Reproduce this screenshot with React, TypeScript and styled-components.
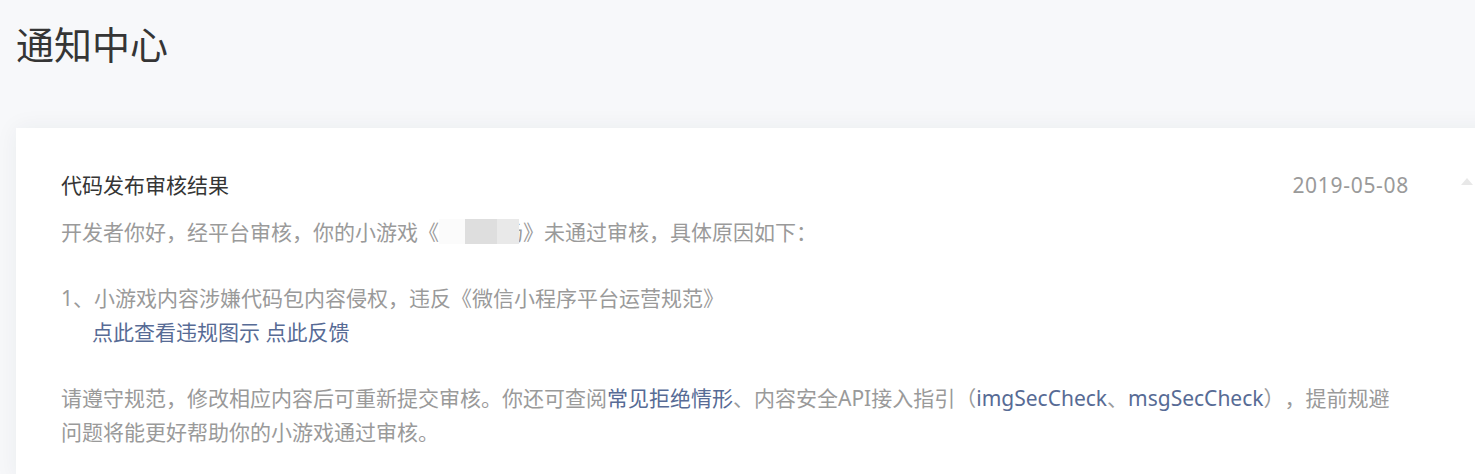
import * as React from 'react';
import styled, { createGlobalStyle } from 'styled-components';

const GlobalStyle = createGlobalStyle`
  html,
  body {
    margin: 0;
    padding: 0;
    background: #f7f8fa;
    overflow: hidden;
  }
  body {
    font-family: 'Noto Sans', 'Noto Sans CJK SC', sans-serif;
    -webkit-font-smoothing: antialiased;
    text-spacing-trim: space-all;
  }
`;

const Page = styled.div`
  width: 1560px;
  min-height: 474px;
`;

const PageHeader = styled.header`
  box-sizing: border-box;
  height: 128px;
  padding: 16px 16px 0;
`;

const PageTitle = styled.h1`
  margin: 0;
  font-size: 38px;
  line-height: 54px;
  font-weight: 400;
  color: #353535;
  font-family: 'Noto Sans CJK SC', sans-serif;
`;

const Card = styled.section`
  box-sizing: border-box;
  width: 1502px;
  margin-left: 16px;
  padding: 40px 45px 30px;
  background: #fff;
  box-shadow: 0 0 22px rgba(40, 50, 70, 0.06);
`;

const CardHead = styled.div`
  display: flex;
  align-items: center;
  margin-bottom: 13px;
`;

const CardTitle = styled.h2`
  margin: 0;
  font-size: 21px;
  line-height: 34px;
  font-weight: 400;
  color: #353535;
`;

const DateText = styled.span`
  margin-left: auto;
  font-size: 21px;
  line-height: 34px;
  letter-spacing: 0.7px;
  color: #9a9a9a;
`;

const Arrow = styled.span`
  width: 0;
  height: 0;
  margin-left: 52px;
  margin-top: -8px;
  border-left: 6px solid transparent;
  border-right: 6px solid transparent;
  border-bottom: 7px solid #e8e8e8;
`;

const Body = styled.div`
  width: 1340px;
  font-size: 21px;
  line-height: 34px;
  color: #9a9a9a;
`;

const Para = styled.p<{ indent?: boolean }>`
  margin: 0;
  padding-left: ${(p) => (p.indent ? '31px' : '0')};
`;

const Gap = styled.div`
  height: 32px;
`;

const Link = styled.a`
  color: #576b95;
  text-decoration: none;
  cursor: pointer;
`;

const Masked = styled.span`
  position: relative;
  display: inline-block;
`;

const MaskBar = styled.span`
  position: absolute;
  left: 0;
  top: 4px;
  bottom: 5px;
  display: flex;
`;

const MaskCell = styled.span<{ w: number; tone: string }>`
  width: ${(p) => p.w}px;
  background: ${(p) => p.tone};
`;

const GameName = () => (
  <Masked>
    某某某场
    <MaskBar>
      <MaskCell w={26} tone="#fbfbfb" />
      <MaskCell w={32} tone="#dedede" />
      <MaskCell w={22} tone="#e9e9e9" />
    </MaskBar>
  </Masked>
);

export default function App() {
  return (
    <Page>
      <GlobalStyle />
      <PageHeader>
        <PageTitle>通知中心</PageTitle>
      </PageHeader>
      <Card>
        <CardHead>
          <CardTitle>代码发布审核结果</CardTitle>
          <DateText>2019-05-08</DateText>
          <Arrow />
        </CardHead>
        <Body>
          <Para>
            开发者你好，经平台审核，你的小游戏《<GameName />》未通过审核，具体原因如下：
          </Para>
          <Gap />
          <Para>1、小游戏内容涉嫌代码包内容侵权，违反《微信小程序平台运营规范》</Para>
          <Para indent>
            <Link>点此查看违规图示</Link> <Link>点此反馈</Link>
          </Para>
          <Gap />
          <Para>
            请遵守规范，修改相应内容后可重新提交审核。你还可查阅<Link>常见拒绝情形</Link>、内容安全API接入指引（
            <Link>imgSecCheck</Link>、<Link>msgSecCheck</Link>），提前规避问题将能更好帮助你的小游戏通过审核。
          </Para>
        </Body>
      </Card>
    </Page>
  );
}
